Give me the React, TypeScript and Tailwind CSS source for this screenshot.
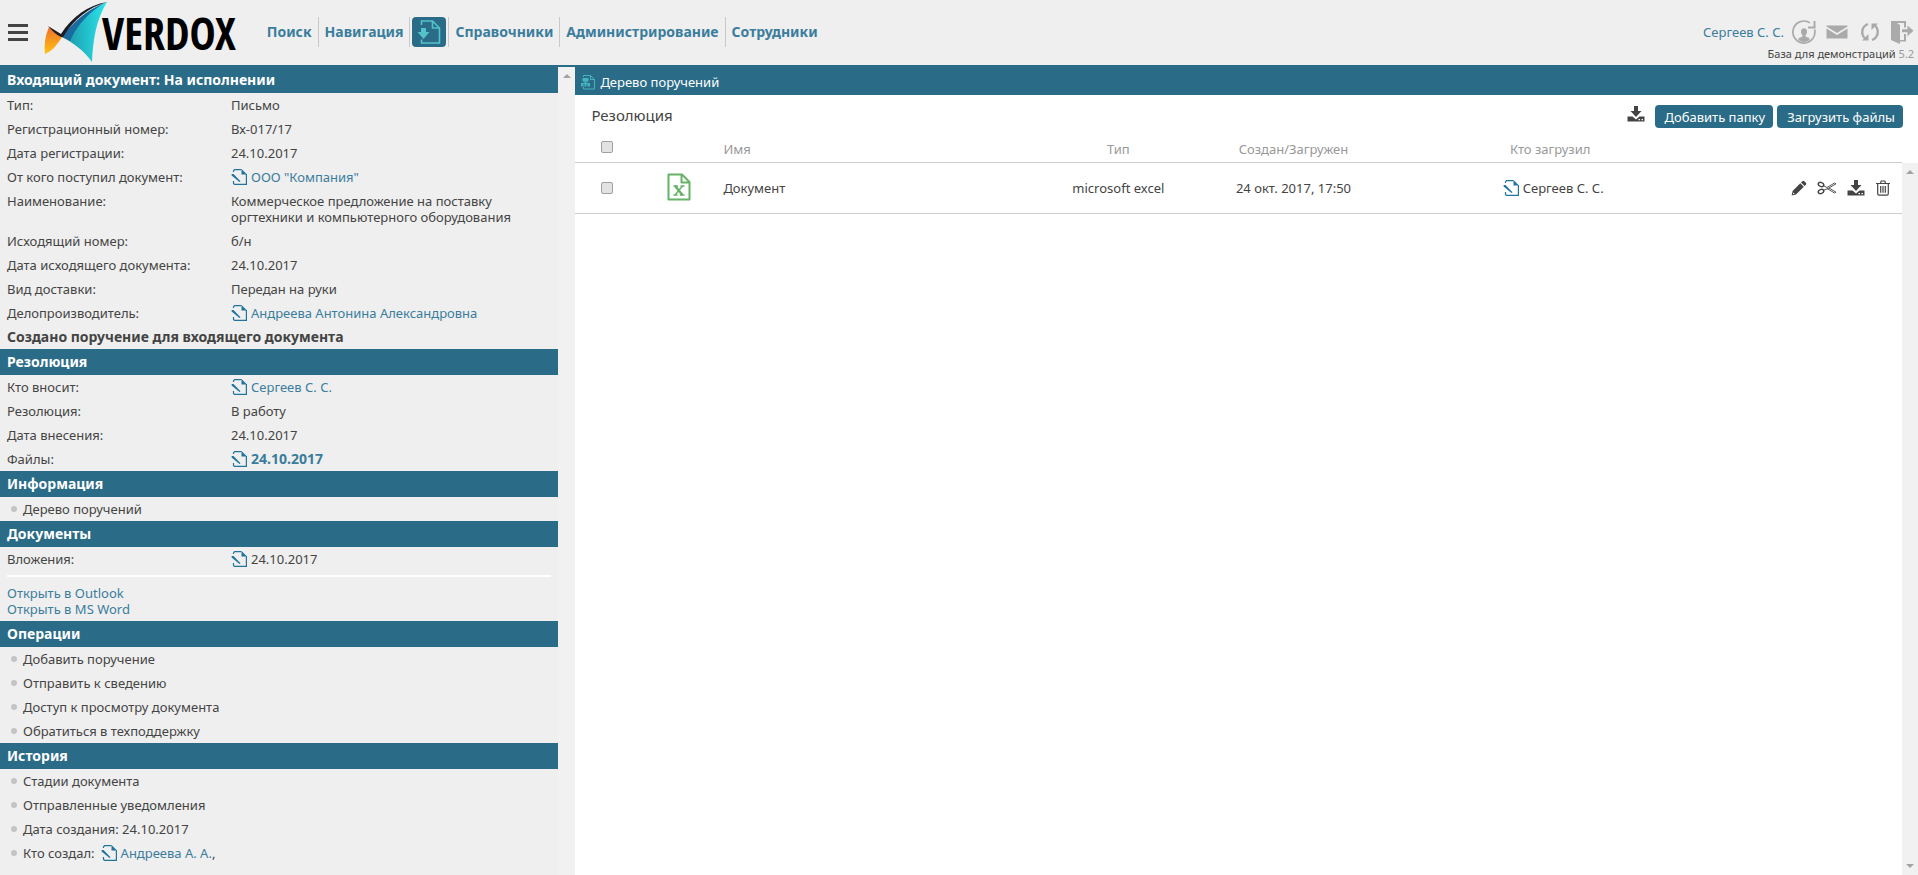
import type { ReactNode } from 'react';

function Logo() {
  return (
    <svg viewBox="0 0 64 62" className="h-[62px] w-16" aria-hidden="true">
      <defs>
        <linearGradient id="sail" x1="0" y1="0" x2="1" y2="0">
          <stop offset="0" stopColor="#1c8fa5" />
          <stop offset="0.55" stopColor="#22c0cb" />
          <stop offset="1" stopColor="#2ee6ea" />
        </linearGradient>
        <linearGradient id="flame" x1="0" y1="0" x2="0" y2="1">
          <stop offset="0" stopColor="#f0702a" />
          <stop offset="1" stopColor="#fdc312" />
        </linearGradient>
      </defs>
      <path d="M5 27C1 36 0 45 1 54C8 51 13 45 18 37Z" fill="url(#flame)" />
      <path d="M18 37C32 19 44 10 63 2C52 20 49 40 48 62C40 51 30 43 18 37Z" fill="url(#sail)" />
      <path d="M18 37C29 22 42 11 60 3C46 12 34 23 26 41Z" fill="#1b6ba0" />
      <path d="M4 26L17 34C28 17 44 5 63 2C44 8 31 18 19 37L17 37C13 35 8 31 4 26Z" fill="#1c1c22" />
    </svg>
  );
}

function PageIcon() {
  return (
    <svg viewBox="0 0 16 16" className="size-4 shrink-0 text-[#1f759c]" fill="none" stroke="currentColor" aria-hidden="true">
      <path d="M2.500 3V2L3.500 .6H10.500M15.400 5V15.400H3.500L2.500 14.500V12" strokeWidth="1.200" />
      <path d="M10.500 0V5.500H16Z" fill="currentColor" stroke="none" />
      <path d="M.6 5L2.500 5L9.500 12.200L8.500 13L.6 6.500Z" fill="currentColor" stroke="none" />
    </svg>
  );
}

function InboxPageIcon() {
  return (
    <svg viewBox="0 0 24 24" className="size-6 text-[#52c3c9]" fill="none" stroke="currentColor" strokeWidth="1.600" aria-hidden="true">
      <path d="M4.500 5V1H15.500L22.500 8V23H4.500V19.500M15.500 1V8H22.500" />
      <path d="M4 8H9V12H12.500L6.500 19L.5 12H4Z" fill="currentColor" stroke="none" />
    </svg>
  );
}

function TreePageIcon() {
  return (
    <svg viewBox="0 0 16 16" className="size-4 text-[#45b4bd]" fill="none" stroke="currentColor" aria-hidden="true">
      <path d="M3.500 3V1.500H10.500L14.500 5.500V15H3.500V13M10.500 1.500V5.500H14.500" />
      <path d="M2.500 4H8.500V7.500H2.500ZM1 9H10V10H1ZM1 10H3.500V12.500H1ZM4.500 7H6.500V12.500H4.500ZM7.500 10H10V12.500H7.500Z" fill="currentColor" stroke="none" />
    </svg>
  );
}

function DownloadIcon() {
  return (
    <svg viewBox="0 0 18 16" className="h-4 w-[18px]" fill="currentColor" aria-hidden="true">
      <path d="M7 0H11V5H14.500L9 11L3.500 5H7Z" />
      <path d="M.5 10.500H5.500L9 13.500L12.500 10.500H17.500V15.500H.5ZM11.500 13V14.200H13V13ZM14.500 13V14.200H16V13Z" fillRule="evenodd" />
    </svg>
  );
}

function PencilIcon() {
  return (
    <svg viewBox="0 0 16 16" className="size-4" fill="currentColor" aria-hidden="true">
      <path d="M11.300 1.200Q12.300 .2 13.300 1.200L14.900 2.800Q15.800 3.700 14.900 4.700L13.600 6L10 2.500ZM9.300 3.200L12.800 6.700L5 14.400L.6 15.500L1.600 11ZM2.300 12.500L1.900 14.200L3.600 13.800Z" fillRule="evenodd" />
    </svg>
  );
}

function ScissorsIcon() {
  return (
    <svg viewBox="0 0 20 16" className="h-4 w-5" fill="none" stroke="currentColor" aria-hidden="true">
      <ellipse cx="4" cy="4.500" rx="2.800" ry="2" strokeWidth="1.500" transform="rotate(20 4 4.500)" />
      <ellipse cx="4" cy="11.500" rx="2.800" ry="2" strokeWidth="1.500" transform="rotate(-20 4 11.500)" />
      <path d="M6.500 5.800L10 7.500L17.500 3L19 3.800L11 8.500L6.500 10.200M10 8.500L17.500 13L19 12.200L12 8" strokeWidth=".9" />
    </svg>
  );
}

function TrashIcon() {
  return (
    <svg viewBox="0 0 16 16" className="size-4" fill="none" stroke="currentColor" strokeWidth="1.200" aria-hidden="true">
      <path d="M1 3.500H15M5.500 3.300L6.200 1H9.800L10.500 3.300M2.700 3.500V13.500Q2.700 15.200 4 15.200H12Q13.300 15.200 13.300 13.500V3.500M5.700 6V12.700M8 6V12.700M10.300 6V12.700" />
    </svg>
  );
}

function ExcelIcon() {
  return (
    <svg viewBox="0 0 24 28" className="h-7 w-6" aria-hidden="true">
      <path d="M1.500 1.500H15L22.500 9V26.500H1.500ZM14.500 1.500V9.500H22.500" fill="none" stroke="#66b266" strokeWidth="2" strokeLinejoin="round" />
      <path d="M8 13L15.500 22" fill="none" stroke="#66b266" strokeWidth="2.400" />
      <path d="M15.500 13L8 22" fill="none" stroke="#66b266" strokeWidth="1.400" />
      <path d="M6.500 13H11M13.500 13H17.500M6.500 22H10.500M13 22H17.500" stroke="#66b266" strokeWidth="1.400" />
    </svg>
  );
}

function UserIcon() {
  return (
    <svg viewBox="0 0 24 24" className="size-6" fill="none" stroke="currentColor" aria-hidden="true">
      <path d="M18 2.900A11 11 0 1 0 22.600 9.500" strokeWidth="1.700" />
      <path d="M16 7.500H22.500V1" strokeWidth="2" />
      <path d="M12 8.300C14 8.300 15 9.700 15 11.500C15 13.200 14.300 14.500 13.500 15.200V16.500L17.500 18.300V20.300Q12 23.500 6.500 20.300V18.300L10.500 16.500V15.200C9.700 14.500 9 13.200 9 11.500C9 9.700 10 8.300 12 8.300Z" fill="currentColor" stroke="none" />
    </svg>
  );
}

function MailIcon() {
  return (
    <svg viewBox="0 0 22 14" className="h-3.5 w-[22px]" fill="currentColor" aria-hidden="true">
      <path d="M.5 .5H21.500V1.500L11 8L.5 1.500ZM.5 3.500L11 10L21.500 3.500V13.500H.5Z" />
    </svg>
  );
}

function RefreshIcon() {
  return (
    <svg viewBox="0 0 20 20" className="size-5" fill="none" stroke="currentColor" strokeWidth="2.400" aria-hidden="true">
      <path d="M8 2C1.500 4.500 .5 12 5 16.500M12 18C18.500 15.500 19.500 8 15 3.500" />
      <path d="M2 18.500H8.500V12ZM18 1.500H11.500V8Z" fill="currentColor" stroke="none" />
    </svg>
  );
}

function ExitIcon() {
  return (
    <svg viewBox="0 0 24 24" className="size-6" fill="currentColor" aria-hidden="true">
      <path d="M1 1H16V7.500H14V3H7L10 5V20H14V14H16V21.500H10V24L1 20Z" />
      <path d="M12 9.300H17.500V5.500L23.500 10.800L17.500 16.200V12.300H12Z" />
    </svg>
  );
}

function Arrow({ down = false }: { down?: boolean }) {
  return (
    <svg viewBox="0 0 8 4" className="h-1 w-2 text-[#a3a3a3]" fill="currentColor" aria-hidden="true">
      <path d={down ? 'M0 0H8L4 4Z' : 'M0 4H8L4 0Z'} />
    </svg>
  );
}

function DocLink({ children, tone = 'text-[#3a7d9d]' }: { children: ReactNode; tone?: string }) {
  return (
    <a href="#" className={`inline-flex items-center gap-1 align-top ${tone}`}>
      <PageIcon />
      <span>{children}</span>
    </a>
  );
}

function Section({ title, first = false, children }: { title: string; first?: boolean; children: ReactNode }) {
  return (
    <section>
      <h2 className={`flex items-center bg-[#2a6b87] px-[7px] text-sm font-bold text-white ${first ? 'h-7 pt-0.5' : 'h-[26px]'}`}>{title}</h2>
      {children}
    </section>
  );
}

function Fields({ rows }: { rows: [string, ReactNode][] }) {
  return (
    <dl>
      {rows.map(([label, value]) => (
        <div key={label} className="flex px-[7px] py-1">
          <dt className="w-56 shrink-0">{label}</dt>
          <dd className="max-w-72">{value}</dd>
        </div>
      ))}
    </dl>
  );
}

function Bullets({ items }: { items: ReactNode[] }) {
  return (
    <ul>
      {items.map((item, i) => (
        <li key={i} className="flex items-center gap-1.5 py-1 pl-[11px]">
          <span className="size-1.5 rounded-full bg-[#c4c4c4]" />
          {item}
        </li>
      ))}
    </ul>
  );
}

function Plain({ children }: { children: ReactNode }) {
  return <a href="#">{children}</a>;
}

const navLink = 'flex h-[30px] items-center border-l border-[#c8c8c8] px-1.5';
const checkbox = 'mx-auto block size-3 appearance-none rounded-xs border border-[#a0a0a0] bg-[#e2e2e2]';
const action = 'h-[23px] rounded bg-[#2a6b87] pt-0.5 pr-2 pl-2.5 text-white';

export default function App() {
  return (
    <div className='flex min-h-screen flex-col bg-white font-["Noto_Sans",sans-serif] text-[13px] leading-4 text-[#444]'>
      <header className="flex h-[65px] items-start justify-between bg-[#efefef]">
        <div className="flex items-start">
          <button type="button" aria-label="Меню" className="mt-6 ml-2 flex w-5 flex-col gap-1">
            <span className="h-[3px] bg-[#444]" />
            <span className="h-[3px] bg-[#444]" />
            <span className="h-[3px] bg-[#444]" />
          </button>
          <a href="#" className="ml-4 flex h-[62px] items-center text-black">
            <Logo />
            <span className='-ml-1.5 pt-1 font-["Open_Sans_Condensed","Roboto_Condensed",sans-serif] text-[44px] leading-[56px] font-bold'>VERDOX</span>
          </a>
          <nav className="mt-[17px] ml-[25px] flex text-sm font-bold text-[#3a7d9d]">
            <a href="#" className="flex h-[30px] items-center px-1.5">Поиск</a>
            <a href="#" className={navLink}>Навигация</a>
            <div className="flex border-l border-[#c8c8c8] px-0.5">
              <button type="button" aria-label="Входящие" className="flex h-[30px] w-[34px] items-center justify-center rounded bg-[#2a6b87]">
                <InboxPageIcon />
              </button>
            </div>
            <a href="#" className={navLink}>Справочники</a>
            <a href="#" className={navLink}>Администрирование</a>
            <a href="#" className={navLink}>Сотрудники</a>
          </nav>
        </div>
        <div className="flex flex-col items-end pt-5 pr-1">
          <div className="flex items-center text-[#aaa]">
            <a href="#" className="mr-2 text-[#3a7d9d]">Сергеев С. С.</a>
            <button type="button" aria-label="Профиль" className="mr-2.5"><UserIcon /></button>
            <button type="button" aria-label="Почта" className="mr-3"><MailIcon /></button>
            <button type="button" aria-label="Обновить" className="mr-2.5"><RefreshIcon /></button>
            <button type="button" aria-label="Выход"><ExitIcon /></button>
          </div>
          <p className="text-[11px] leading-5">База для демонстраций <span className="text-[#999]">5.2</span></p>
        </div>
      </header>

      <div className="flex flex-1">
        <aside className="flex w-[30%] shrink-0 bg-[#efefef]">
          <div className="flex-1">
            <Section title="Входящий документ: На исполнении" first>
              <Fields
                rows={[
                  ['Тип:', 'Письмо'],
                  ['Регистрационный номер:', 'Вх-017/17'],
                  ['Дата регистрации:', '24.10.2017'],
                  ['От кого поступил документ:', <DocLink>ООО "Компания"</DocLink>],
                  ['Наименование:', 'Коммерческое предложение на поставку оргтехники и компьютерного оборудования'],
                  ['Исходящий номер:', 'б/н'],
                  ['Дата исходящего документа:', '24.10.2017'],
                  ['Вид доставки:', 'Передан на руки'],
                  ['Делопроизводитель:', <DocLink>Андреева Антонина Александровна</DocLink>],
                ]}
              />
              <p className="px-[7px] py-1 text-sm leading-4 font-bold">Создано поручение для входящего документа</p>
            </Section>
            <Section title="Резолюция">
              <Fields
                rows={[
                  ['Кто вносит:', <DocLink>Сергеев С. С.</DocLink>],
                  ['Резолюция:', 'В работу'],
                  ['Дата внесения:', '24.10.2017'],
                  ['Файлы:', <DocLink><b className="text-sm leading-4">24.10.2017</b></DocLink>],
                ]}
              />
            </Section>
            <Section title="Информация">
              <Bullets items={[<Plain>Дерево поручений</Plain>]} />
            </Section>
            <Section title="Документы">
              <Fields rows={[['Вложения:', <DocLink tone="text-[#444]">24.10.2017</DocLink>]]} />
              <hr className="mx-[7px] mt-1 border-t-2 border-white" />
              <div className="flex flex-col items-start px-[7px] pt-2 pb-1 text-[#3a7d9d]">
                <a href="#">Открыть в Outlook</a>
                <a href="#">Открыть в MS Word</a>
              </div>
            </Section>
            <Section title="Операции">
              <Bullets
                items={[
                  <Plain>Добавить поручение</Plain>,
                  <Plain>Отправить к сведению</Plain>,
                  <Plain>Доступ к просмотру документа</Plain>,
                  <Plain>Обратиться в техподдержку</Plain>,
                ]}
              />
            </Section>
            <Section title="История">
              <Bullets
                items={[
                  <Plain>Стадии документа</Plain>,
                  <Plain>Отправленные уведомления</Plain>,
                  'Дата создания: 24.10.2017',
                  <span className="flex"><span className="mr-1.5">Кто создал:</span><DocLink>Андреева А. А.</DocLink>,</span>,
                ]}
              />
            </Section>
          </div>
          <div className="flex w-[17px] flex-col border-t-2 border-[#2a6b87] bg-[#f1f1f1]">
            <div className="flex h-[17px] items-center justify-center"><Arrow /></div>
          </div>
        </aside>

        <main className="flex min-w-0 flex-1 flex-col">
          <h1 className="flex h-[30px] items-center gap-1 bg-[#2a6b87] pt-1 pl-[5px] text-white">
            <TreePageIcon />
            Дерево поручений
          </h1>
          <div className="flex h-10 items-center pt-1 pr-[15px] pb-0.5 pl-4">
            <h2 className="flex-1 pb-0.5 text-[15px]">Резолюция</h2>
            <button type="button" aria-label="Скачать" className="mr-2.5 pb-1"><DownloadIcon /></button>
            <button type="button" className={`mr-1 ${action}`}>Добавить папку</button>
            <button type="button" className={action}>Загрузить файлы</button>
          </div>
          <div className="flex flex-1">
            <div className="min-w-0 flex-1">
              <table className="w-full table-fixed border-separate border-spacing-0">
                <colgroup>
                  <col className="w-[64px]" />
                  <col className="w-[79px]" />
                  <col className="w-[23.5%]" />
                  <col className="w-[13.3%]" />
                  <col className="w-[13.1%]" />
                  <col className="w-[25.6%]" />
                  <col />
                </colgroup>
                <thead>
                  <tr className="h-7 text-[#999] *:border-b *:border-[#ccc]">
                    <th className="p-0 pb-1"><input type="checkbox" aria-label="Выбрать все" className={checkbox} /></th>
                    <th className="p-0" />
                    <th className="p-0 pl-[5px] text-left font-normal">Имя</th>
                    <th className="p-0 font-normal">Тип</th>
                    <th className="p-0 font-normal">Создан/Загружен</th>
                    <th className="p-0 font-normal">Кто загрузил</th>
                    <th className="p-0" />
                  </tr>
                </thead>
                <tbody>
                  <tr className="h-[51px] text-center *:border-b *:border-[#ccc]">
                    <td className="p-0"><input type="checkbox" aria-label="Выбрать Документ" className={checkbox} /></td>
                    <td className="p-0 pb-0.5"><span className="flex justify-center"><ExcelIcon /></span></td>
                    <td className="p-0 pl-[5px] text-left">Документ</td>
                    <td className="p-0">microsoft excel</td>
                    <td className="p-0">24 окт. 2017, 17:50</td>
                    <td className="p-0"><span className="pl-1.5"><DocLink tone="text-[#444]">Сергеев С. С.</DocLink></span></td>
                    <td className="p-0">
                      <span className="flex items-center justify-end gap-2.5 pr-[11px]">
                        <button type="button" aria-label="Изменить"><PencilIcon /></button>
                        <button type="button" aria-label="Вырезать"><ScissorsIcon /></button>
                        <button type="button" aria-label="Скачать файл"><DownloadIcon /></button>
                        <button type="button" aria-label="Удалить"><TrashIcon /></button>
                      </span>
                    </td>
                  </tr>
                </tbody>
              </table>
            </div>
            <div className="mt-7 flex w-4 flex-col items-center justify-between bg-[#f1f1f1] py-[7px]">
              <Arrow />
              <Arrow down />
            </div>
          </div>
        </main>
      </div>
    </div>
  );
}
